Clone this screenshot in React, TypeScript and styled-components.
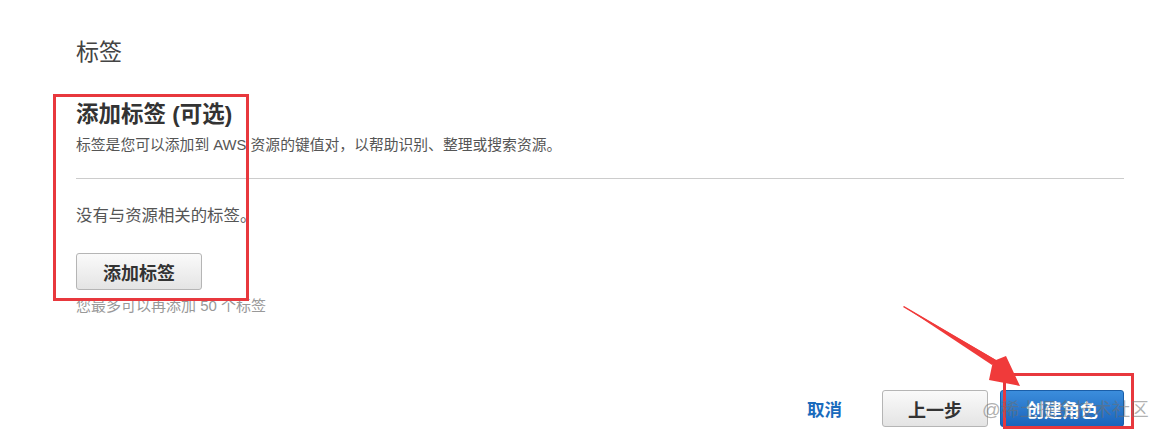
import styled, { createGlobalStyle } from 'styled-components';

const GlobalStyle = createGlobalStyle`
  html, body {
    margin: 0;
    padding: 0;
    background: #ffffff;
  }
  body {
    font-family: "Liberation Sans", Arial, "Noto Sans CJK SC", sans-serif;
    color: #444;
  }
`;

const App = () => {
  return (
    <Page>
      <GlobalStyle />
      <PageTitle>标签</PageTitle>
      <Section>
        <SectionTitle>添加标签 (可选)</SectionTitle>
        <SectionDesc>标签是您可以添加到 AWS 资源的键值对，以帮助识别、整理或搜索资源。</SectionDesc>
        <Divider />
        <EmptyText>没有与资源相关的标签。</EmptyText>
        <AddButton>添加标签</AddButton>
        <Hint>您最多可以再添加 50 个标签</Hint>
      </Section>
      <Footer>
        <CancelLink href="#">取消</CancelLink>
        <Button>上一步</Button>
        <PrimaryButton>创建角色</PrimaryButton>
      </Footer>

      {/* annotation overlays */}
      <Highlight style={{ left: 53, top: 94, width: 196, height: 207 }} />
      <Highlight style={{ left: 1003, top: 373, width: 131, height: 56 }} />
      <Arrow width="1158" height="438" viewBox="0 0 1158 438">
        <polygon points="903,307 993,361 989,380 1020,386 1006,356 996,360 904,306" fill="#f03a3a" />
        <polygon points="903,306 996,360 992,365" fill="#f03a3a" />
      </Arrow>
      <Watermark>@稀土掘金技术社区</Watermark>
    </Page>
  );
};

export default App;

const Page = styled.div`
  position: relative;
  width: 1158px;
  height: 438px;
  box-sizing: border-box;
  padding: 37px 34px 0 76px;
  overflow: hidden;
`;

const PageTitle = styled.h1`
  margin: 0;
  font-size: 23px;
  line-height: 30px;
  font-weight: normal;
  color: #444;
`;

const Section = styled.section`
  margin-top: 34px;
  display: flex;
  flex-direction: column;
  align-items: flex-start;
`;

const SectionTitle = styled.h2`
  margin: 0;
  font-size: 22.5px;
  line-height: 28px;
  font-weight: bold;
  color: #333;
`;

const SectionDesc = styled.p`
  margin: 6px 0 0;
  font-size: 14.8px;
  line-height: 20px;
  color: #555;
`;

const Divider = styled.hr`
  align-self: stretch;
  margin: 23px 0 0;
  border: none;
  border-top: 1px solid #cccccc;
`;

const EmptyText = styled.p`
  margin: 25px 0 0;
  font-size: 16.4px;
  line-height: 22px;
  color: #555;
`;

const Button = styled.button`
  height: 37px;
  padding: 0 25px;
  border: 1px solid #b5b5b5;
  border-radius: 3px;
  background: linear-gradient(#fafafa, #e4e4e4);
  font-family: inherit;
  font-size: 18px;
  font-weight: bold;
  color: #333;
  cursor: pointer;
`;

const AddButton = styled(Button)`
  margin-top: 27px;
  padding: 0 26px;
`;

const Hint = styled.p`
  margin: 6px 0 0;
  font-size: 15px;
  line-height: 20px;
  color: #999;
`;

const Footer = styled.div`
  margin-top: 74px;
  display: flex;
  justify-content: flex-end;
  align-items: center;
  gap: 12px;
`;

const CancelLink = styled.a`
  margin-right: 28px;
  font-size: 17.5px;
  font-weight: bold;
  color: #1a6bbd;
  text-decoration: none;
`;

const PrimaryButton = styled.button`
  height: 37px;
  padding: 0 25px;
  border: 1px solid #1a5ea8;
  border-radius: 3px;
  background: linear-gradient(#3b8ddc, #1b64bb);
  font-family: inherit;
  font-size: 18px;
  font-weight: bold;
  color: #fff;
  cursor: pointer;
`;

const Highlight = styled.div`
  position: absolute;
  box-sizing: border-box;
  border: 3px solid #e8383d;
  pointer-events: none;
`;

const Arrow = styled.svg`
  position: absolute;
  left: 0;
  top: 0;
  pointer-events: none;
`;

const Watermark = styled.div`
  position: absolute;
  left: 982px;
  top: 398px;
  font-size: 18.5px;
  line-height: 24px;
  color: rgba(110, 110, 110, 0.55);
  pointer-events: none;
  white-space: nowrap;
`;
